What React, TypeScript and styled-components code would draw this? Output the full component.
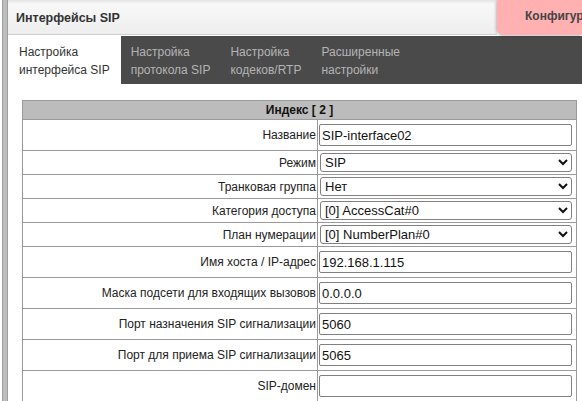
import React from 'react'
import styled, { createGlobalStyle } from 'styled-components'

const GlobalStyle = createGlobalStyle`
  html, body {
    margin: 0;
    padding: 0;
    overflow: hidden;
    background: #fff;
    font-family: "Liberation Sans", Arial, sans-serif;
  }
`

const Page = styled.div`
  display: flex;
  height: 100vh;
`

const SideRail = styled.div`
  flex-shrink: 0;
  width: 4px;
  margin-left: 2px;
  background: #bdbdbd;
  border-left: 1px solid #9d9d9d;
  border-right: 1px solid #9d9d9d;
`

const Main = styled.div`
  flex: 1;
  min-width: 0;
  display: flex;
  flex-direction: column;
`

const Header = styled.div`
  display: flex;
  height: 35px;
  flex-shrink: 0;
`

const Title = styled.div`
  flex: 1;
  display: flex;
  align-items: center;
  padding: 1px 0 0 8px;
  font-size: 12.5px;
  font-weight: bold;
  color: #333;
  background: linear-gradient(#e4e4e4 0, #f8f8f8 4px, #eeeeee 100%);
  border-bottom: 1px solid #cfcfcf;
`

const ConfigTab = styled.div`
  flex-shrink: 0;
  width: 57px;
  padding: 0 0 4px 28px;
  display: flex;
  align-items: center;
  overflow: hidden;
  white-space: nowrap;
  font-size: 12px;
  font-weight: bold;
  color: #444;
  background: #ffb1b1;
  border-bottom-left-radius: 7px;
  box-shadow: -1px 1px 3px rgba(0, 0, 0, 0.25);
  position: relative;
  z-index: 1;
`

const TabBar = styled.div`
  display: flex;
  height: 48px;
  flex-shrink: 0;
  margin-top: 1px;
  background: #4a4a4a;
`

const Tab = styled.div<{ $active?: boolean }>`
  padding: 7px ${(p) => (p.$active ? '11px' : '10px')} 0;
  font-size: 12px;
  line-height: 18px;
  white-space: nowrap;
  color: ${(p) => (p.$active ? '#333' : '#b4b4b4')};
  background: ${(p) => (p.$active ? '#fff' : 'transparent')};
`

const Content = styled.div`
  padding: 16px 5px 0 14px;
`

const Table = styled.table`
  width: 100%;
  border-collapse: collapse;
  border: 1px solid #9a9a9a;
`

const HeadCell = styled.th`
  height: 18px;
  padding: 0;
  background: #bcbcbc;
  border: 1px solid #9a9a9a;
  font-size: 12px;
  font-weight: bold;
  color: #111;
  text-align: center;
`

const Row = styled.tr<{ $tall?: boolean }>`
  height: ${(p) => (p.$tall ? '31px' : '24px')};
`

const LabelCell = styled.td`
  width: 293px;
  padding: 0 1px 0 0;
  border: 1px solid #9a9a9a;
  font-size: 12px;
  color: #222;
  text-align: right;
  white-space: nowrap;
`

const FieldCell = styled.td`
  padding: 0 4px 0 1px;
  border: 1px solid #9a9a9a;
  vertical-align: middle;
`

const TextInput = styled.input`
  display: block;
  box-sizing: border-box;
  width: 100%;
  height: 22px;
  margin: 0;
  padding: 0 2px;
  border: 1px solid #808080;
  border-radius: 2px;
  font-family: "Liberation Sans", Arial, sans-serif;
  font-size: 13px;
  color: #111;
`

const Select = styled.select`
  display: block;
  box-sizing: border-box;
  width: calc(100% - 1px);
  height: 19px;
  margin: 0 0 0 1px;
  padding: 0;
  border: 1px solid #808080;
  border-radius: 3px;
  background: #fff;
  font-family: "Liberation Sans", Arial, sans-serif;
  font-size: 13px;
  color: #111;
`

type Field =
  | { label: string; kind: 'input'; value: string }
  | { label: string; kind: 'select'; value: string }

const fields: Field[] = [
  { label: 'Название', kind: 'input', value: 'SIP-interface02' },
  { label: 'Режим', kind: 'select', value: 'SIP' },
  { label: 'Транковая группа', kind: 'select', value: 'Нет' },
  { label: 'Категория доступа', kind: 'select', value: '[0] AccessCat#0' },
  { label: 'План нумерации', kind: 'select', value: '[0] NumberPlan#0' },
  { label: 'Имя хоста / IP-адрес', kind: 'input', value: '192.168.1.115' },
  { label: 'Маска подсети для входящих вызовов', kind: 'input', value: '0.0.0.0' },
  { label: 'Порт назначения SIP сигнализации', kind: 'input', value: '5060' },
  { label: 'Порт для приема SIP сигнализации', kind: 'input', value: '5065' },
  { label: 'SIP-домен', kind: 'input', value: '' },
]

const tabs = [
  ['Настройка', 'интерфейса SIP'],
  ['Настройка', 'протокола SIP'],
  ['Настройка', 'кодеков/RTP'],
  ['Расширенные', 'настройки'],
]

export default function App() {
  return (
    <>
      <GlobalStyle />
      <Page>
        <SideRail />
        <Main>
          <Header>
            <Title>Интерфейсы SIP</Title>
            <ConfigTab>Конфигурация</ConfigTab>
          </Header>
          <TabBar>
            {tabs.map((t, i) => (
              <Tab key={i} $active={i === 0}>
                {t[0]}
                <br />
                {t[1]}
              </Tab>
            ))}
          </TabBar>
          <Content>
            <Table>
              <thead>
                <tr>
                  <HeadCell colSpan={2}>Индекс [ 2 ]</HeadCell>
                </tr>
              </thead>
              <tbody>
                {fields.map((f) => (
                  <Row key={f.label} $tall={f.kind === 'input'}>
                    <LabelCell>{f.label}</LabelCell>
                    <FieldCell>
                      {f.kind === 'input' ? (
                        <TextInput defaultValue={f.value} />
                      ) : (
                        <Select defaultValue={f.value}>
                          <option>{f.value}</option>
                        </Select>
                      )}
                    </FieldCell>
                  </Row>
                ))}
              </tbody>
            </Table>
          </Content>
        </Main>
      </Page>
    </>
  )
}
